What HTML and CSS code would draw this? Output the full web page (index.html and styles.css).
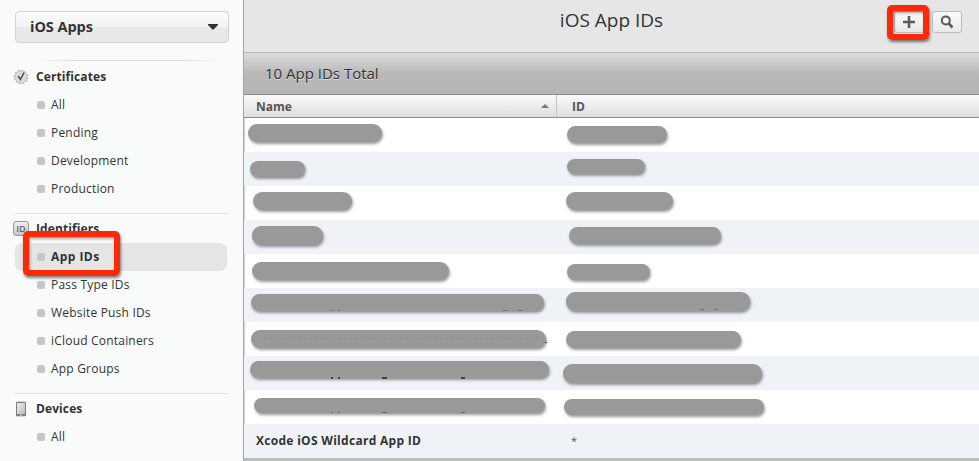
FILE: index.html
```html
<!DOCTYPE html>
<html lang="en">
<head>
<meta charset="utf-8">
<title>iOS App IDs</title>
<link rel="stylesheet" href="styles.css">
</head>
<body>
<div class="app">
  <aside class="sidebar">
    <div class="picker"><span class="picker-label">iOS Apps</span><svg width="10" height="6" viewBox="0 0 10 6"><path d="M0 0h10v1L5.6 5.6h-1.2L0 1z" fill="#333"/></svg></div>
    <div class="fade-rule"></div>
    <section class="group">
      <h2><svg class="icon" width="16" height="16" viewBox="0 0 16 16"><circle cx="8" cy="8" r="6.6" fill="none" stroke="#b4b4b4" stroke-width="1.3" stroke-dasharray="2 1.456"/><circle cx="8" cy="8" r="6" fill="#dcdcdc" stroke="#c0c0c0" stroke-width=".8"/><path d="M5.2 7l2.2 3.4L11 3.6" fill="none" stroke="#505050" stroke-width="1.5"/></svg><span>Certificates</span></h2>
      <ul><li><span>All</span></li><li><span>Pending</span></li><li><span>Development</span></li><li><span>Production</span></li></ul>
    </section>
    <section class="group ruled">
      <h2><b class="icon id-icon">ID</b><span>Identifiers</span></h2>
      <ul><li class="active"><span>App IDs</span><div class="mark mark-nav"></div></li><li><span>Pass Type IDs</span></li><li><span>Website Push IDs</span></li><li><span>iCloud Containers</span></li><li><span>App Groups</span></li></ul>
    </section>
    <section class="group ruled">
      <h2><svg class="icon" width="16" height="16" viewBox="0 0 16 16"><defs><linearGradient id="screen" x1="0" y1="0" x2="1" y2="1"><stop offset="0" stop-color="#eee"/><stop offset="1" stop-color="#bbb"/></linearGradient></defs><rect x="3" y=".8" width="10" height="14.5" rx="1.3" fill="#7d7d80"/><rect x="4" y="2" width="8" height="11" fill="url(#screen)"/><rect x="7" y="13.7" width="2" height="1" fill="#ddd"/></svg><span>Devices</span></h2>
      <ul><li><span>All</span></li></ul>
    </section>
  </aside>
  <main class="content">
    <header class="topbar">
      <h1>iOS App IDs</h1>
      <div class="tools">
        <div class="tool"><svg width="12" height="12" viewBox="0 0 12 12"><path d="M6 0v12M0 6h12" stroke="#5c5c5c" stroke-width="2.6"/></svg><div class="mark mark-add"></div></div>
        <div class="tool"><svg width="14" height="14" viewBox="0 0 14 14"><circle cx="5.8" cy="5.4" r="4" fill="none" stroke="#5c5c5c" stroke-width="2"/><path d="M8.7 8.5l3.8 4" stroke="#5c5c5c" stroke-width="2.6"/></svg></div>
      </div>
    </header>
    <div class="summary">10 App IDs Total</div>
    <div class="thead"><div class="cell sorted"><span>Name</span><svg width="8" height="4" viewBox="0 0 8 4"><path d="M0 4l4-4 4 4z" fill="#777"/></svg></div><div class="cell">ID</div></div>
    <div class="rows">
      <div class="row"><i class="pill n1"></i><i class="pill d1"></i></div>
      <div class="row"><i class="pill n2"></i><i class="pill d2"></i></div>
      <div class="row"><i class="pill n3"></i><i class="pill d3"></i></div>
      <div class="row"><i class="pill n4"></i><i class="pill d4"></i></div>
      <div class="row"><i class="pill n5"></i><i class="pill d5"></i></div>
      <div class="row"><i class="pill n6"></i><i class="pill d6"></i><svg class="traces" width="520" height="34"><path d="M87 22.5h2M94 22.5h2M259 22.5h5M274 22.5h5M456 21.5h4M470 21.5h4" stroke="#666" stroke-opacity=".8"/></svg></div>
      <div class="row"><i class="pill n7"></i><i class="pill d7"></i><svg class="traces" width="520" height="34"><path d="M20 16.5H294" stroke="#888" stroke-opacity=".6" stroke-dasharray="3 2 5 2 2 3"/><path d="M301 20.5h1.5" stroke="#222"/></svg></div>
      <div class="row"><i class="pill n8"></i><i class="pill d8"></i><svg class="traces" width="520" height="34"><path d="M87 22h2M94 22h2M138 22h5M217 22h4" stroke="#222" stroke-width="1.4"/></svg></div>
      <div class="row"><i class="pill n9"></i><i class="pill d9"></i><svg class="traces" width="520" height="34"><path d="M87 22.5h2M94 22.5h2M138 22.5h5M217 22.5h4" stroke="#555" stroke-opacity=".8"/></svg></div>
      <div class="row"><div class="cell name">Xcode iOS Wildcard App ID</div><div class="cell star">*</div></div>
    </div>
  </main>
</div>
</body>
</html>
```
FILE: styles.css
```css
* { box-sizing: border-box; }
body { margin: 0; font-family: "Open Sans", sans-serif; color: #333; font-size: 12px; }
h1, h2, ul { margin: 0; padding: 0; list-style: none; }
svg { display: block; }
.app { display: flex; width: 979px; height: 461px; overflow: hidden; background: #f9fbfa; }
.sidebar { width: 243px; flex: none; padding: 11px 15px 0; }
.picker { width: 214px; height: 32px; display: flex; align-items: center; justify-content: space-between; padding: 0 10px 0 14px; border: 1px solid #d2d2d2; border-radius: 4px; background: linear-gradient(#fcfcfc, #f2f2f2 50%, #e9e9e9 51%, #e7e7e7); }
.picker-label { padding-bottom: 2px; font-size: 14.5px; font-weight: 700; letter-spacing: -.05px; }
.fade-rule { height: 1px; margin: 17px 6px 2px 20px; background: linear-gradient(90deg, transparent, #ddd 20%, #ddd 80%, transparent); }
.group h2 { display: flex; align-items: center; height: 28px; gap: 7px; margin-left: -2px; font-size: 12px; font-weight: 700; letter-spacing: .1px; }
.group span { padding-bottom: 2px; }
.icon { flex: none; width: 16px; }
.id-icon { height: 15px; line-height: 13px; text-align: center; font-size: 9px; font-weight: 600; color: #666; border: 1px solid #999; border-radius: 3px; background: linear-gradient(#eee, #c8c8c8); }
.group li { position: relative; width: 212px; height: 28px; display: flex; align-items: center; gap: 6px; padding-left: 22px; border-radius: 7px; font-size: 12px; letter-spacing: .2px; }
.group li::before { content: ""; width: 8px; height: 8px; border-radius: 2px; background: #c5c6c7; }
.group li.active { background: #e5e5e5; font-weight: 700; letter-spacing: .45px; }
.ruled { width: 213px; margin-top: 10px; border-top: 1px solid #e0e2e1; }
.ruled h2 { height: 29px; }
.ruled h2 span { padding-bottom: 0; }
.mark { position: absolute; border: 6px solid #f92a08; border-radius: 5px; box-shadow: 1px 2px 3px rgba(0,0,0,.5), inset 1px 2px 3px rgba(0,0,0,.35); }
.mark-nav { left: 8px; top: -12px; width: 97px; height: 45px; }
.mark-add { left: -8px; top: -7px; width: 42px; height: 35px; }
.content { flex: 1; display: flex; flex-direction: column; border-left: 1px solid #a5a5a5; background: #fff; box-shadow: inset 2px 0 2px -1px rgba(0,0,0,.2); }
.topbar { position: relative; height: 52px; display: flex; justify-content: center; background: #e6e6e6; }
.topbar h1 { height: 40px; line-height: 40px; font-size: 19px; font-weight: 400; }
.tools { position: absolute; right: 17px; top: 11px; display: flex; gap: 9px; }
.tool { position: relative; width: 30px; height: 22px; display: grid; place-items: center; border: 1px solid #bbb; border-radius: 3px; background: linear-gradient(#f9f9f9, #f2f2f2 50%, #e9e9e9); }
.tool:first-child { margin-right: -1px; }
.summary { height: 43px; border-top: 1px solid #b5b5b5; border-bottom: 1px solid #8e8e8e; background: linear-gradient(#dcdcdc, #b9b9b9 50%, #b5b5b5); padding-left: 21px; line-height: 40px; font-size: 15px; text-shadow: 0 1px #ddd; }
.thead { height: 23px; display: grid; grid-template-columns: 313px 1fr; background: linear-gradient(#fafafa, #dedede); border-bottom: 1px solid #8e8e8e; font-weight: 700; color: #555; }
.cell { display: flex; align-items: center; padding-left: 12px; }
.thead .cell { padding-left: 15px; }
.thead .sorted { justify-content: space-between; padding: 0 7px 0 12px; border-right: 1px solid #c3c3c3; }
.row { position: relative; height: 34px; display: grid; grid-template-columns: 316px 1fr; }
.row:nth-child(even) { background: #eff3f8; }
.row .cell { padding-bottom: 2px; }
.rows { border-bottom: 3px solid #bbb; }
.name { font-weight: 700; letter-spacing: .29px; }
.star { padding-left: 11px; font-size: 11px; color: #555; }
.pill { position: absolute; border-radius: 9px; background: #999; box-shadow: 1px 2px 3px rgba(0,0,0,.4); }
.traces { position: absolute; left: 0; top: 0; }
.n1 { left: 4px; top: 6px; width: 134px; height: 18px; }
.d1 { left: 323px; top: 8px; width: 100px; height: 17px; }
.n2 { left: 6px; top: 9px; width: 55px; height: 16px; }
.d2 { left: 323px; top: 7px; width: 78px; height: 15px; }
.n3 { left: 9px; top: 6px; width: 99px; height: 18px; }
.d3 { left: 322px; top: 6px; width: 107px; height: 18px; }
.n4 { left: 8px; top: 6px; width: 71px; height: 19px; }
.d4 { left: 325px; top: 7px; width: 152px; height: 17px; }
.n5 { left: 8px; top: 8px; width: 197px; height: 18px; }
.d5 { left: 323px; top: 10px; width: 83px; height: 16px; }
.n6 { left: 7px; top: 6px; width: 293px; height: 17px; }
.d6 { left: 322px; top: 4px; width: 184px; height: 19px; }
.n7 { left: 7px; top: 8px; width: 295px; height: 18px; }
.d7 { left: 322px; top: 9px; width: 175px; height: 17px; }
.n8 { left: 6px; top: 5px; width: 299px; height: 17px; }
.d8 { left: 319px; top: 8px; width: 199px; height: 19px; }
.n9 { left: 10px; top: 8px; width: 291px; height: 15px; }
.d9 { left: 320px; top: 9px; width: 200px; height: 16px; }
```
